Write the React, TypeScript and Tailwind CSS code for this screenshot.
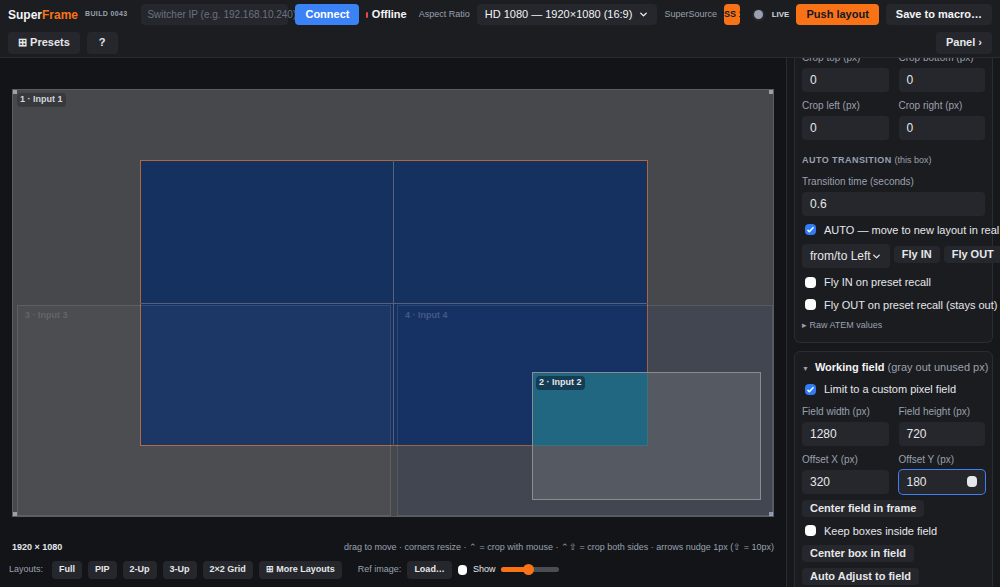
import { ChevronDown } from "lucide-react";

const inp = "h-[24px] rounded bg-[#25272c] px-2 text-[12px] text-gray-200 flex items-center";
const btn = "rounded bg-[#25272c] px-2 text-[11px] font-bold text-gray-200 flex items-center";
const lbl = "text-[10px] text-gray-400";

function Field({ label, value, focus }: { label: string; value: string; focus?: boolean }) {
  return (
    <div className="flex flex-col gap-[3px]">
      <span className={lbl}>{label}</span>
      <div className={`${inp} h-[21px] justify-between ${focus ? "ring-1 ring-[#3b82f6]" : ""}`}>
        {value}
        {focus && <span className="h-[11px] w-[10px] rounded-sm bg-gray-200" />}
      </div>
    </div>
  );
}

function Check({ on, text }: { on?: boolean; text: string }) {
  return (
    <label className="flex items-center gap-[8px] text-[11px] text-gray-200">
      <span className={`ml-[3px] flex h-[11px] w-[11px] shrink-0 items-center justify-center rounded-sm ${on ? "bg-[#2f7cf6]" : "bg-white"}`}>
        {on && (
          <svg viewBox="0 0 12 12" className="h-[9px] w-[9px]">
            <path d="M2 6.5l2.5 2.5L10 3" stroke="white" strokeWidth="2" fill="none" />
          </svg>
        )}
      </span>
      {text}
    </label>
  );
}

function Box({ cls, label, labelCls }: { cls: string; label: string; labelCls: string }) {
  return (
    <div className={`absolute ${cls}`}>
      <span className={`absolute left-[4px] top-[3px] rounded-sm px-[3px] text-[9px] font-bold ${labelCls}`}>{label}</span>
    </div>
  );
}

export default function App() {
  return (
    <div className="flex h-[587px] w-[1000px] flex-col overflow-hidden whitespace-nowrap bg-[#131418] font-[Liberation_Sans,Arial,sans-serif]">
      <header className="flex h-[58px] shrink-0 flex-col justify-center gap-[6px] border-b border-[#2a2c31] bg-[#1c1d21] px-[8px]">
        <div className="flex h-[22px] items-center gap-[7px]">
          <span className="text-[12px] font-bold text-gray-100">
            Super<span className="text-[#f97316]">Frame</span>
          </span>
          <span className="text-[7px] font-bold tracking-wider text-gray-400">BUILD 0043</span>
          <div className="ml-[7px] flex h-[21px] w-[147px] items-center rounded bg-[#25272c] px-[6px] text-[10px] text-gray-500">
            Switcher IP (e.g. 192.168.10.240)
          </div>
          <div className="flex h-[21px] items-center rounded bg-[#3b82f6] px-[10px] text-[11px] font-bold text-white">Connect</div>
          <span className="h-[6px] w-[6px] rounded-full bg-[#ef4444]" />
          <span className="-ml-[3px] text-[11px] font-bold text-gray-100">Offline</span>
          <span className="ml-[5px] text-[9px] text-gray-400">Aspect Ratio</span>
          <div className="flex h-[21px] items-center gap-[6px] rounded bg-[#25272c] px-[8px] text-[11px] text-gray-100">
            HD 1080 — 1920×1080 (16:9) <ChevronDown size={11} strokeWidth={3} />
          </div>
          <span className="text-[9px] text-gray-400">SuperSource</span>
          <div className="flex h-[21px] overflow-hidden rounded">
            <span className="flex w-[34px] items-center justify-center bg-[#f97316] text-[9px] font-bold text-gray-900">SS 1</span>
            <span className="flex w-[34px] items-center justify-center bg-[#25272c] text-[9px] font-bold text-gray-400">SS 2</span>
          </div>
          <span className="ml-[5px] flex h-[12px] w-[25px] items-center rounded-full bg-[#25272c] px-[2px]">
            <span className="h-[9px] w-[9px] rounded-full bg-gray-400" />
          </span>
          <span className="text-[8px] font-bold text-gray-300">LIVE</span>
          <div className="flex h-[21px] items-center rounded bg-[#f97316] px-[10px] text-[11px] font-bold text-gray-900">Push layout</div>
          <div className="flex h-[21px] items-center rounded bg-[#25272c] px-[10px] text-[11px] font-bold text-gray-100">Save to macro…</div>
        </div>
        <div className="flex h-[22px] items-center gap-[7px]">
          <div className="flex h-[22px] items-center rounded bg-[#25272c] px-[10px] text-[11px] font-bold text-gray-200">⊞ Presets</div>
          <div className="flex h-[22px] items-center rounded bg-[#25272c] px-[12px] text-[11px] font-bold text-gray-200">?</div>
          <div className="ml-auto flex h-[22px] items-center rounded bg-[#25272c] px-[10px] text-[11px] font-bold text-gray-200">Panel ›</div>
        </div>
      </header>

      <div className="flex min-h-0 flex-1">
        <main className="flex w-[787px] flex-col border-r border-[#2a2c31] px-[12px] pt-[31px]">
          <div className="relative h-[428px] w-[762px] border border-[#5b5d60] bg-[#46484b]">
            <span className="absolute left-0 top-0 h-[4px] w-[4px] bg-gray-400" />
            <span className="absolute right-0 top-0 h-[4px] w-[4px] bg-gray-400" />
            <span className="absolute bottom-0 left-0 h-[4px] w-[4px] bg-gray-400" />
            <span className="absolute bottom-0 right-0 h-[4px] w-[4px] bg-gray-400" />
            <span className="absolute left-[4px] top-[3px] rounded-sm bg-black/20 px-[3px] text-[9px] font-bold text-gray-300">1 · Input 1</span>
            <div className="absolute left-[127px] top-[70px] h-[286px] w-[508px] border border-[#b0673a] bg-[#153160]" />
            <div className="absolute left-[380px] top-[70px] h-[286px] w-px bg-[#55627a]" />
            <div className="absolute left-[127px] top-[213px] h-px w-[508px] bg-[#55627a]" />
            <Box cls="left-[4px] top-[215px] h-[211px] w-[374px] border border-white/10 bg-white/[0.03]" label="3 · Input 3" labelCls="text-white/15" />
            <Box cls="left-[384px] top-[215px] h-[211px] w-[376px] border border-white/10 bg-[#2b3a8a]/10" label="4 · Input 4" labelCls="text-white/20" />
            <Box cls="left-[519px] top-[282px] h-[128px] w-[229px] border border-[#8a8c8f] bg-white/10" label="" labelCls="" />
            <div className="absolute left-[520px] top-[283px] h-[73px] w-[115px] bg-[#1f6f86]/80" />
            <span className="absolute left-[523px] top-[286px] rounded-sm bg-[#12324a]/80 px-[3px] text-[9px] font-bold text-gray-200">2 · Input 2</span>
          </div>
          <div className="mt-[24px] flex items-center justify-between">
            <span className="text-[9px] font-bold text-gray-200">1920 × 1080</span>
            <span className="text-[9px] text-gray-400">drag to move · corners resize · ⌃ = crop with mouse · ⌃⇧ = crop both sides · arrows nudge 1px (⇧ = 10px)</span>
          </div>
          <div className="mt-[6px] flex items-center gap-[6px] -ml-[3px]">
            <span className="mr-[3px] text-[9px] text-gray-400">Layouts:</span>
            {["Full", "PIP", "2-Up", "3-Up", "2×2 Grid", "⊞ More Layouts"].map((l) => (
              <span key={l} className="flex h-[18px] items-center rounded bg-[#25272c] px-[7px] text-[9px] font-bold text-gray-200">{l}</span>
            ))}
            <span className="ml-[10px] text-[9px] text-gray-400">Ref image:</span>
            <span className="flex h-[18px] items-center rounded bg-[#25272c] px-[7px] text-[9px] font-bold text-gray-200">Load…</span>
            <span className="h-[10px] w-[9px] rounded-sm bg-white" />
            <span className="text-[9px] text-gray-200">Show</span>
            <span className="relative flex h-[5px] w-[58px] items-center rounded-full bg-[#4b4d52]">
              <span className="h-[5px] w-[27px] rounded-full bg-[#f97316]" />
              <span className="absolute left-[22px] h-[11px] w-[11px] rounded-full bg-[#f97316]" />
            </span>
          </div>
        </main>

        <aside className="min-w-0 flex-1 overflow-hidden bg-[#17181c] px-[7px]">
          <div className="-mt-[8px] flex flex-col gap-[8px]">
            <div className="flex flex-col gap-[6px] rounded-b-md border border-t-0 border-[#2a2c31] bg-[#1b1c20] px-[7px] pb-[9px]">
              <div className="grid grid-cols-2 gap-x-[10px] gap-y-[6px]">
                <Field label="Crop top (px)" value="0" />
                <Field label="Crop bottom (px)" value="0" />
                <Field label="Crop left (px)" value="0" />
                <Field label="Crop right (px)" value="0" />
              </div>
              <div className="mt-[8px] text-[9px] font-bold tracking-wider text-gray-400">
                AUTO TRANSITION <span className="font-normal tracking-normal">(this box)</span>
              </div>
              <Field label="Transition time (seconds)" value="0.6" />
              <Check on text="AUTO — move to new layout in real time" />
              <div className="flex gap-[4px]">
                <div className={`${inp} h-[21px] w-[94px] justify-between text-[10px]`}>
                  from/to Left <ChevronDown size={11} strokeWidth={3} />
                </div>
                <span className={`${btn} h-[17px] mt-[2px] text-[9px]`}>Fly IN</span>
                <span className={`${btn} h-[17px] mt-[2px] text-[9px]`}>Fly OUT</span>
              </div>
              <Check text="Fly IN on preset recall" />
              <Check text="Fly OUT on preset recall (stays out)" />
              <span className="text-[9px] text-gray-400">▸ Raw ATEM values</span>
            </div>

            <div className="flex flex-col gap-[6px] rounded-md border border-[#2a2c31] bg-[#1b1c20] px-[7px] py-[7px]">
              <div className="text-[11px] font-bold text-gray-100">
                <span className="mr-[6px] text-[7px] text-gray-400">▼</span>Working field{" "}
                <span className="font-normal text-gray-400">(gray out unused px)</span>
              </div>
              <Check on text="Limit to a custom pixel field" />
              <div className="grid grid-cols-2 gap-x-[10px] gap-y-[6px]">
                <Field label="Field width (px)" value="1280" />
                <Field label="Field height (px)" value="720" />
                <Field label="Offset X (px)" value="320" />
                <Field label="Offset Y (px)" value="180" focus />
              </div>
              <span className={`${btn} h-[17px] w-fit text-[9px]`}>Center field in frame</span>
              <Check text="Keep boxes inside field" />
              <span className={`${btn} h-[17px] w-fit text-[9px]`}>Center box in field</span>
              <span className={`${btn} h-[17px] w-fit text-[9px]`}>Auto Adjust to field</span>
              <p className="whitespace-normal text-[8px] leading-[11px] text-gray-400">
                Fits the current layout into the field wherever it's placed — may not work with every layout.
              </p>
            </div>

            <div className="flex flex-col gap-[6px] rounded-md border border-[#2a2c31] bg-[#1b1c20] px-[7px] py-[7px]">
              <div className="text-[11px] font-bold text-gray-100">
                <span className="mr-[6px] text-[7px] text-gray-400">▼</span>Animation
              </div>
              <div className="grid grid-cols-2 gap-x-[10px]">
                <Field label="Duration (ms)" value="600" />
                <div className="flex flex-col gap-[3px]">
                  <span className={lbl}>Easing</span>
                  <div className={`${inp} h-[21px] justify-between`}>Smooth (in-out) <ChevronDown size={11} strokeWidth={3} /></div>
                </div>
              </div>
            </div>
          </div>
        </aside>
      </div>
    </div>
  );
}
